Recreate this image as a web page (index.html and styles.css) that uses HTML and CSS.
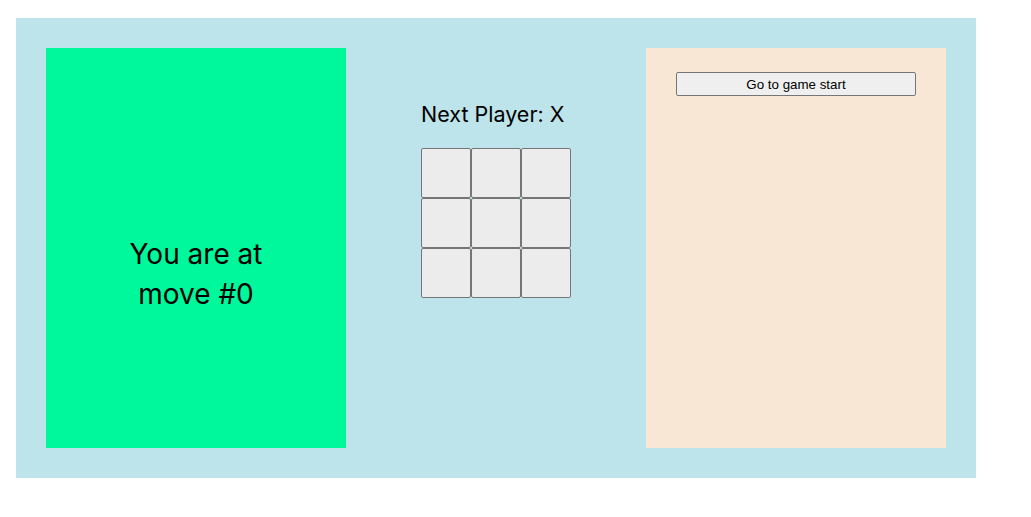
FILE: index.html
```html
<!DOCTYPE html>
<html>
<head>
<meta charset="utf-8">
<link rel="stylesheet" href="styles.css">
</head>
<body>
<div class="game">
  <div class="panel info">
    <div class="move-text">You are at move #0</div>
  </div>
  <div class="center">
    <div class="board-wrap">
      <div class="status">Next Player: X</div>
      <div class="board">
        <button class="square"></button><button class="square"></button><button class="square"></button>
        <button class="square"></button><button class="square"></button><button class="square"></button>
        <button class="square"></button><button class="square"></button><button class="square"></button>
      </div>
    </div>
  </div>
  <div class="panel history">
    <ol class="moves">
      <li><button class="move-btn">Go to game start</button></li>
    </ol>
  </div>
</div>
</body>
</html>
```
FILE: styles.css
```css
body {
  margin: 18px 0 0 16px;
  font-family: Inter, "Liberation Sans", sans-serif;
}
.game {
  width: 900px;
  height: 400px;
  padding: 30px;
  background: #bde3eb;
  display: flex;
}
.panel {
  width: 300px;
  height: 400px;
  box-sizing: border-box;
}
.info {
  background: #00f89c;
  display: flex;
  align-items: center;
  justify-content: center;
  padding: 52px 70px 0;
}
.move-text {
  font-size: 28px;
  line-height: 40px;
  text-align: center;
}
.center {
  width: 300px;
  display: flex;
  justify-content: center;
}
.board-wrap {
  width: 150px;
  padding-top: 53px;
}
.status {
  font-size: 21.5px;
  line-height: 26px;
  margin-bottom: 21px;
  white-space: nowrap;
}
.board {
  display: grid;
  grid-template-columns: repeat(3, 50px);
  grid-template-rows: repeat(3, 50px);
}
.square {
  width: 50px;
  height: 50px;
  margin: 0;
  padding: 0;
  background: #ececec;
  border: 1px solid #767676;
  border-radius: 2px;
}
.history {
  background: #f9e7d5;
  padding: 24px 30px;
}
.moves {
  list-style: none;
  margin: 0;
  padding: 0;
}
.move-btn {
  width: 240px;
  height: 24px;
  margin: 0;
  font-family: "Liberation Sans", Arial, sans-serif;
  font-size: 13.33px;
  background: #efefef;
  border: 1px solid #767676;
  border-radius: 2px;
  color: #000;
}
```
